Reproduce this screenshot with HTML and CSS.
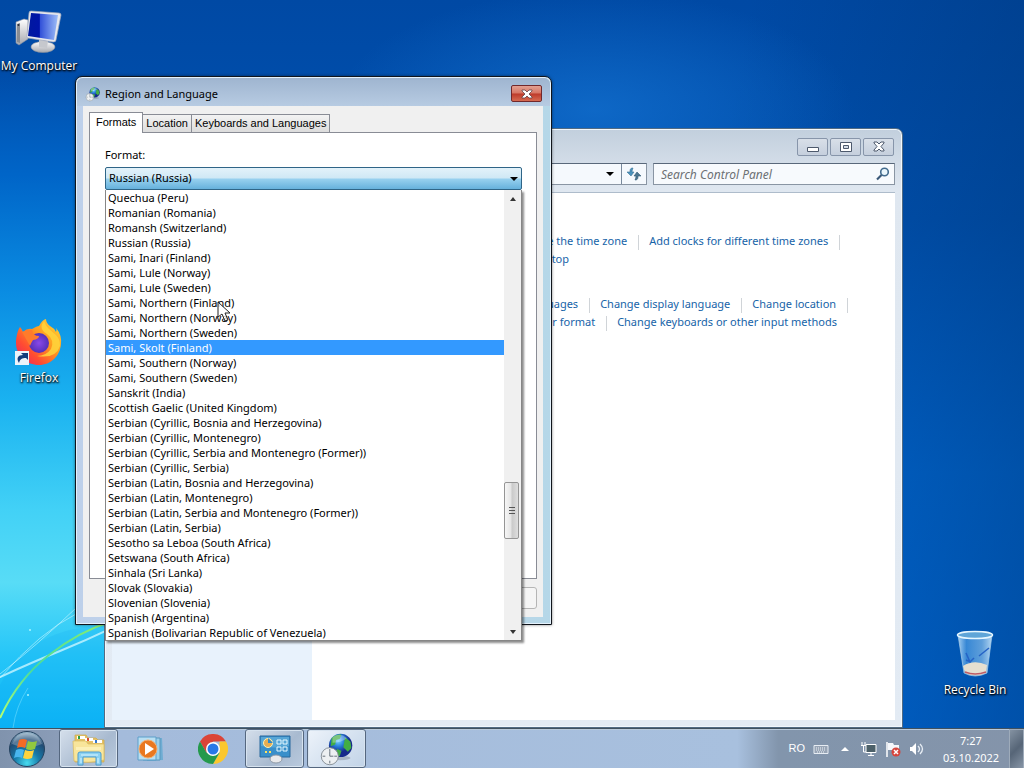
FILE: index.html
```
<!DOCTYPE html>
<html lang="en">
<head>
    <meta charset="UTF-8">
    <meta name="viewport" content="width=device-width, initial-scale=1.0">
    <title>Region and Language</title>
    <link rel="stylesheet" href="styles.css">
</head>
<body>
    <main class="desktop">
        <svg class="streaks" viewBox="0 0 110 200" aria-hidden="true">
            <defs>
                <linearGradient id="green" x1="0" y1="1" x2="1" y2="0">
                    <stop offset="0" stop-color="#b8ff70"/><stop offset=".4" stop-color="#49dc9a"/><stop offset="1" stop-color="#8df06c"/>
                </linearGradient>
            </defs>
            <path d="M0 157Q30 98 110 97V200H0Z" fill="#0098f0" opacity=".12"/>
            <path d="M0 149Q35 133 60 123T110 101" fill="none" stroke="#c9f5ff" stroke-width="2" opacity=".8"/>
            <path d="M0 146Q35 119 76 80M0 150Q40 104 76 86" fill="none" stroke="#c8f7ff" opacity=".6"/>
            <path d="M0 190Q18 151 49 127T110 94" fill="none" stroke="url(#green)" stroke-width="2"/>
            <path d="M13 200Q16 178 28 160" fill="none" stroke="#7fe3ff" opacity=".5"/>
            <circle cx="28" cy="167" r="1" fill="#a8f6ff"/><circle cx="30" cy="102" r="1" fill="#a8f6ff"/>
        </svg>

        <a class="shortcut computer" href="#">
            <svg width="48" height="44" viewBox="0 0 48 44">
                <defs>
                    <linearGradient id="screen"><stop offset="0" stop-color="#0018a0"/><stop offset=".38" stop-color="#0014a8"/><stop offset=".4" stop-color="#3150d8"/><stop offset="1" stop-color="#9dbdf8"/></linearGradient>
                    <linearGradient id="metal" x2="0" y2="1"><stop offset="0" stop-color="#fff"/><stop offset="1" stop-color="#a6a8ae"/></linearGradient>
                </defs>
                <path d="M1 12 9 9l4 1v19L4 35l-3-2z" fill="url(#metal)" stroke="#8c93a5" stroke-width=".6"/>
                <path d="M2 14l3-1v20l-3-1z" fill="#8a8d92"/><circle cx="3.500" cy="15" r="1" fill="#252b38"/>
                <ellipse cx="28" cy="37" rx="12" ry="5.500" fill="url(#metal)" stroke="#888e9c" stroke-width=".6"/>
                <path d="M24 29l9 2-1 7-8-1z" fill="#c6c8cd"/>
                <path d="M14 3q0-2 2-2l28 2q2 0 2 2l-5 25q0 2-3 2l-25-4q-2 0-1-3z" fill="#e6e8ed" stroke="#9da6bb" stroke-width=".7"/>
                <path d="M16 3l27 2-4 25-26-4z" fill="url(#screen)"/>
            </svg>
            <span>My Computer</span>
        </a>
        <a class="shortcut firefox" href="#">
            <svg width="48" height="48" viewBox="0 0 48 48">
                <defs>
                    <linearGradient id="fox" x1="1" y1="0" x2="0" y2="1"><stop offset="0" stop-color="#ffe03a"/><stop offset=".4" stop-color="#ff9a20"/><stop offset=".7" stop-color="#ff4b32"/><stop offset="1" stop-color="#e51b70"/></linearGradient>
                    <radialGradient id="purple"><stop offset="0" stop-color="#8a48e8"/><stop offset="1" stop-color="#5430b8"/></radialGradient>
                </defs>
                <path d="M5 9q2 2 3 5 4-4 9-3 5-3 7-3Q27 2 31 1q0 4 4 7 4 2 6 6 1-2 0-4 6 7 5 16C45 38 36 47 24 47S1 38 1 25C1 18 3 12 5 9z" fill="url(#fox)"/>
                <circle cx="24" cy="25" r="10" fill="url(#purple)"/>
                <path d="M29 3q-6 8 3 13 8 6 4 15-5 7-14 7 19 3 23-10C46 15 33 15 29 3z" fill="#ffd53c" opacity=".85"/>
                <path d="M7 14q6-3 10-2 1 6 7 6 0 3-6 4-2 3-3 6-4-7-8-14z" fill="#ff7b2b"/>
                <path d="M0 33h14v14H0z" fill="#edf3fa"/>
                <path d="M4 45c-3-5-1-8 4-8l-2-2h7v7l-2-2c-4 0-6 1-7 5z" fill="#143c7c"/>
            </svg>
            <span>Firefox</span>
        </a>
        <a class="shortcut recycle" href="#">
            <svg width="40" height="48" viewBox="0 0 40 48">
                <defs><linearGradient id="glass"><stop offset="0" stop-color="#d0edff" stop-opacity=".8"/><stop offset=".25" stop-color="#4e9de4" stop-opacity=".7"/><stop offset=".7" stop-color="#91c6f1" stop-opacity=".65"/><stop offset="1" stop-color="#d5eefe" stop-opacity=".85"/></linearGradient></defs>
                <path d="M3 5h34l-5 38q-12 6-23 0z" fill="url(#glass)" stroke="#a9cde8" stroke-width=".7"/>
                <path d="M8 36q11-7 24-1l-1 8q-11 5-21 0z" fill="#e6dfd0"/>
                <path d="M10 42q10 4 21 0" fill="none" stroke="#bd5b66" stroke-width="1.500"/>
                <path d="M11 23l4 9 4-4M16 32l-5-2M24 26l10-8" fill="none" stroke="#2663c6" stroke-width="1.500"/>
                <ellipse cx="20" cy="5" rx="17.500" ry="3.500" fill="#5fa5d8" stroke="#e6f6ff" stroke-width="1.500"/>
            </svg>
            <span>Recycle Bin</span>
        </a>

        <section class="window explorer" aria-label="Control Panel">
            <header class="explorer-title">
                <button class="caption-button" aria-label="Minimize"><svg width="12" height="12" viewBox="0 0 12 12"><path d="M.5 6.500h11v4H.5z" fill="#fff" stroke="#4d596c"/></svg></button>
                <button class="caption-button" aria-label="Maximize"><svg width="12" height="12" viewBox="0 0 12 12"><path d="M.5 1.500h11v9H.5z" fill="#fff" stroke="#4d596c"/><path d="M3.500 4.500h5v3h-5z" fill="#d3dbe6" stroke="#4d596c"/></svg></button>
                <button class="caption-button" aria-label="Close"><svg width="12" height="12" viewBox="0 0 12 12"><path d="M1 1h3l2 2 2-2h3v1L8 5.500 11 9v1H8L6 8l-2 2H1V9l3-3.500L1 2z" fill="#fff" stroke="#4d596c"/></svg></button>
            </header>
            <div class="navigation">
                <div class="address">
                    <button class="address-drop" aria-label="Previous locations"><svg width="8" height="4" viewBox="0 0 8 4"><path d="M0 0h8L4 4z"/></svg></button>
                    <button class="refresh" aria-label="Refresh"><svg width="14" height="14" viewBox="0 0 14 14"><path d="M6 1C3 1 3 3 3 5H0l4 4 3-4H5q0-2 1-4z" fill="#4b93bd" stroke="#3a7397" stroke-width=".6"/><path d="M8 13c3 0 3-2 3-4h3l-4-4-3 4h2q0 2-1 4z" fill="#4b7690" stroke="#335c75" stroke-width=".6"/></svg></button>
                </div>
                <label class="search">
                    <input type="text" placeholder="Search Control Panel" aria-label="Search Control Panel">
                    <svg width="14" height="14" viewBox="0 0 14 14"><circle cx="8.500" cy="5" r="3.800" fill="#e9f6fc" stroke="#426b8d" stroke-width="1.600"/><path d="M5.500 8 1 12.500" stroke="#3a5878" stroke-width="2.200"/></svg>
                </label>
            </div>
            <div class="explorer-body">
                <aside class="sidebar"></aside>
                <div class="tasks">
                    <ul class="task-group">
                        <li><a href="#">Set the time and date</a><a href="#">Change the time zone</a><a href="#">Add clocks for different time zones</a></li>
                        <li><a href="#">Add the Clock gadget to the desktop</a></li>
                    </ul>
                    <ul class="task-group">
                        <li><a href="#">Install and uninstall display languages</a><a href="#">Change display language</a><a href="#">Change location</a></li>
                        <li><a href="#">Change the date, time, or number format</a><a href="#">Change keyboards or other input methods</a></li>
                    </ul>
                </div>
            </div>
        </section>

        <section class="window dialog" role="dialog" aria-labelledby="dialog-title">
            <header class="dialog-title">
                <svg width="16" height="16" viewBox="0 0 40 40"><use href="#region-icon"/></svg>
                <h1 id="dialog-title">Region and Language</h1>
                <button class="close-button" aria-label="Close"><svg width="12" height="10" viewBox="0 0 12 10"><path d="M1 1h3l2 2 2-2h3v1L8 5l3 3v1H8L6 7 4 9H1V8l3-3-3-3z" fill="#fff" stroke="#614247" stroke-width=".8"/></svg></button>
            </header>
            <div class="dialog-body">
                <div class="tabs" role="tablist">
                    <button class="tab active" role="tab" aria-selected="true">Formats</button>
                    <button class="tab" role="tab">Location</button>
                    <button class="tab" role="tab">Keyboards and Languages</button>
                </div>
                <div class="panel" role="tabpanel">
                    <label for="format">Format:</label>
                    <div class="combo">
                        <select id="format">
                            <option>Russian (Russia)</option>
                        </select>
                        <svg class="combo-arrow" width="8" height="4" viewBox="0 0 8 4"><path d="M0 0h8L4 4z"/></svg>
                        <div class="menu">
                            <ul class="options" role="listbox" aria-label="Format">
                                <li role="option">Quechua (Peru)</li>
                                <li role="option">Romanian (Romania)</li>
                                <li role="option">Romansh (Switzerland)</li>
                                <li role="option">Russian (Russia)</li>
                                <li role="option">Sami, Inari (Finland)</li>
                                <li role="option">Sami, Lule (Norway)</li>
                                <li role="option">Sami, Lule (Sweden)</li>
                                <li role="option">Sami, Northern (Finland)</li>
                                <li role="option">Sami, Northern (Norway)</li>
                                <li role="option">Sami, Northern (Sweden)</li>
                                <li role="option" class="selected" aria-selected="true">Sami, Skolt (Finland)</li>
                                <li role="option">Sami, Southern (Norway)</li>
                                <li role="option">Sami, Southern (Sweden)</li>
                                <li role="option">Sanskrit (India)</li>
                                <li role="option">Scottish Gaelic (United Kingdom)</li>
                                <li role="option">Serbian (Cyrillic, Bosnia and Herzegovina)</li>
                                <li role="option">Serbian (Cyrillic, Montenegro)</li>
                                <li role="option">Serbian (Cyrillic, Serbia and Montenegro (Former))</li>
                                <li role="option">Serbian (Cyrillic, Serbia)</li>
                                <li role="option">Serbian (Latin, Bosnia and Herzegovina)</li>
                                <li role="option">Serbian (Latin, Montenegro)</li>
                                <li role="option">Serbian (Latin, Serbia and Montenegro (Former))</li>
                                <li role="option">Serbian (Latin, Serbia)</li>
                                <li role="option">Sesotho sa Leboa (South Africa)</li>
                                <li role="option">Setswana (South Africa)</li>
                                <li role="option">Sinhala (Sri Lanka)</li>
                                <li role="option">Slovak (Slovakia)</li>
                                <li role="option">Slovenian (Slovenia)</li>
                                <li role="option">Spanish (Argentina)</li>
                                <li role="option">Spanish (Bolivarian Republic of Venezuela)</li>
                            </ul>
                            <div class="scrollbar">
                                <button class="scroll-arrow" aria-label="Scroll up"><svg width="6" height="4" viewBox="0 0 6 4"><path d="M0 4h6L3 0z" fill="#333"/></svg></button>
                                <div class="track-before"></div>
                                <div class="thumb"><i></i><i></i><i></i></div>
                                <div class="track-after"></div>
                                <button class="scroll-arrow" aria-label="Scroll down"><svg width="6" height="4" viewBox="0 0 6 4"><path d="M0 0h6L3 4z" fill="#333"/></svg></button>
                            </div>
                        </div>
                    </div>
                </div>
                <footer class="dialog-buttons">
                    <button class="push-button" aria-label="Apply"></button>
                </footer>
            </div>
        </section>

        <svg class="cursor" width="14" height="21" viewBox="0 0 14 21" aria-hidden="true"><path d="M1 1v15l4-3 3 7 3-1-3-7h5z" fill="#fff" fill-opacity=".75" stroke="#222"/></svg>
    </main>

    <footer class="taskbar">
        <button class="start" aria-label="Start">
            <svg width="38" height="38" viewBox="0 0 38 38">
                <defs>
                    <radialGradient id="orb" cy=".9" r=".9"><stop offset="0" stop-color="#47dbef"/><stop offset=".4" stop-color="#167aa9"/><stop offset=".75" stop-color="#214b73"/><stop offset="1" stop-color="#a5c3d6"/></radialGradient>
                </defs>
                <circle cx="19" cy="19" r="17.500" fill="url(#orb)" stroke="#24425f"/>
                <path d="M4 14Q8 3 19 3t15 11q-15 7-30 0z" fill="#fff" opacity=".25"/>
                <path d="M11 10q4-2 8 0l-2 8q-4-2-8 0z" fill="#f36a25"/>
                <path d="M20 11q4 2 9 0l-2 8q-5 2-9 0z" fill="#91c83f"/>
                <path d="M8 20q4-2 8 0l-2 8q-4-2-8 0z" fill="#49b6ee"/>
                <path d="M17 20q5 2 9 0l-2 8q-5 2-9 0z" fill="#ffd33d"/>
            </svg>
        </button>
        <nav class="task-buttons" aria-label="Running programs">
            <button class="task-button open" aria-label="Windows Explorer">
                <svg width="36" height="34" viewBox="0 0 36 34">
                    <path d="M4 6V3h11l2 3h8l2 2h6v22H4z" fill="#e5c267" stroke="#cda949" stroke-width=".7"/>
                    <path d="M6 4h8v3H6zM14 6h8v3h-8zM22 8h9v3h-9z" fill="#fff"/><path d="M7 4h2v3H7z" fill="#2f9e44"/><path d="M16 6h2v3h-2z" fill="#dc4c30"/><path d="M24 8h2v3h-2z" fill="#3678ce"/>
                    <path d="M2 9h13l2 3h16v16q-16 4-30 1z" fill="#f8e59b" stroke="#d9b95d" stroke-width=".7"/>
                    <path d="M5 15h25v3H5z" fill="#fff7c9" opacity=".6"/>
                    <path d="M7 33V22q0-2 2-2h19q2 0 2 2v11h-5v-8H12v8z" fill="#8bd1f2" stroke="#4c9bcc"/>
                    <path d="M10 23h17M10 26v5M27 26v5" stroke="#d7f4ff"/>
                </svg>
            </button>
            <button class="task-button" aria-label="Windows Media Player">
                <svg width="30" height="28" viewBox="0 0 30 28">
                    <path d="M9 4l17-1 1 22-16 1z" fill="#6fadd3"/><path d="M7 3h17v22H7z" fill="#9dd0ea" stroke="#5a98bd"/>
                    <path d="M2 2h18v23H2z" fill="#b9dff2" stroke="#5d9fca"/>
                    <circle cx="12" cy="14" r="9" fill="#e97820" stroke="#f4af70"/><path d="M9 8l9 6-9 6z" fill="#fff"/>
                </svg>
            </button>
            <button class="task-button" aria-label="Google Chrome">
                <svg width="30" height="30" viewBox="0 0 30 30">
                    <path d="M2 7.500A15 15 0 0 1 28 7.500H15L8.500 19z" fill="#db4437"/>
                    <path d="M28 7.500A15 15 0 0 1 15 30l6.500-11.300L21.500 7.500z" fill="#fbc72e"/>
                    <path d="M2 7.500A15 15 0 0 0 15 30l6.500-11.300H8.500z" fill="#25994c"/>
                    <circle cx="15" cy="15" r="7" fill="#fff"/><circle cx="15" cy="15" r="5.500" fill="#2878e8"/>
                </svg>
            </button>
            <button class="task-button open" aria-label="Control Panel">
                <svg width="34" height="30" viewBox="0 0 34 30">
                    <path d="M2 2h30v21H2z" fill="#398fca" stroke="#28699d"/><path d="M3 3h28v9Q18 15 3 12z" fill="#6db6de" opacity=".6"/>
                    <circle cx="10" cy="9" r="4.500" fill="#e7ad52" stroke="#fff2b2"/><path d="M10 9V4l5 5z" fill="#2f88c7"/>
                    <path d="M19 6h4v4h-4zM25 6h4v4h-4zM19 13h4v4h-4zM25 13h4v4h-4z" fill="none" stroke="#e7f8ff"/>
                    <path d="M7 18h2M11 18h2" stroke="#ffe35e" stroke-width="2"/><ellipse cx="18" cy="25" rx="6" ry="4" fill="#e8e9eb" stroke="#8d98a5"/>
                </svg>
            </button>
            <button class="task-button open current" aria-label="Region and Language">
                <svg width="36" height="36" viewBox="0 0 40 40">
                    <defs><radialGradient id="globe" cx=".4" cy=".3"><stop offset="0" stop-color="#79d4ff"/><stop offset=".5" stop-color="#287dda"/><stop offset="1" stop-color="#152a8a"/></radialGradient></defs>
                    <g id="region-icon">
                        <ellipse cx="24" cy="30" rx="11" ry="2.500" fill="#8d9baa" opacity=".6"/>
                        <circle cx="24" cy="16" r="13" fill="url(#globe)"/>
                        <path d="M14 8q5-5 11-4l-2 5-4 1-1 5-5 2zM29 7l6 5 1 7-4 4-5-5zM20 20l5 2-2 6h-5z" fill="#42ad45"/>
                        <path d="M15 7q8-6 16 1-7 5-16 5z" fill="#fff" opacity=".3"/>
                        <circle cx="12" cy="28" r="9.500" fill="#edf0f2" stroke="#7f8890"/>
                        <path d="M12 20v3M12 33v3M4 28h3M17 28h3M12 23v5h4" stroke="#596570" fill="none"/>
                    </g>
                </svg>
            </button>
        </nav>
        <div class="tray">
            <span class="language">RO</span>
            <svg width="16" height="12" viewBox="0 0 16 12"><path d="M1 2.500h14v8H1z" fill="#97a4b5" stroke="#e6ecf3"/><path d="M3 5h10M3 7h10M4 9h8" stroke="#eef3f8" stroke-dasharray="1 1"/></svg>
            <svg width="16" height="16" viewBox="0 0 16 16"><path d="M4 10h8L8 6z" fill="#fff"/></svg>
            <svg width="16" height="16" viewBox="0 0 16 16"><path d="M5 3.500h10v8H5z" fill="#4c6069" stroke="#fff"/><path d="M10 12v2M7 14.500h6M1 1v4M4 1v4M0 4.500h5M2.500 5v6H5" fill="none" stroke="#fff"/></svg>
            <svg width="16" height="16" viewBox="0 0 16 16"><path d="M2 1v15" stroke="#fff" stroke-width="1.500"/><path d="M3 2h5l1 2h5v7H8l-1-2H3z" fill="#f5f7fb"/><circle cx="11" cy="11" r="4.500" fill="#d6453d"/><path d="M9 9l4 4M13 9l-4 4" stroke="#fff" stroke-width="1.500"/></svg>
            <svg width="16" height="16" viewBox="0 0 16 16"><path d="M1 6h2l4-4v12l-4-4H1z" fill="#fff"/><path d="M9 5q3 3 0 6M11 3q5 5 0 10" fill="none" stroke="#e7edf4" stroke-width="1.300"/></svg>
            <time class="clock" datetime="2022-10-03T07:27"><span>7:27</span><span>03.10.2022</span></time>
        </div>
        <button class="show-desktop" aria-label="Show desktop"></button>
    </footer>
</body>
</html>
```
FILE: styles.css
```
* {
    box-sizing: border-box;
}
body {
    margin: 0;
    height: 100vh;
    display: flex;
    flex-direction: column;
    overflow: hidden;
    font-family: "Noto Sans", "Open Sans", sans-serif;
    font-size: 11px;
    line-height: 15px;
    color: #000;
}
button, input, select {
    font: inherit;
    color: inherit;
    margin: 0;
    padding: 0;
}
ul {
    list-style: none;
    margin: 0;
    padding: 0;
}
a {
    text-decoration: none;
}
svg {
    display: block;
    flex: none;
}

/* desktop */
.desktop {
    flex: 1;
    position: relative;
    background:
        linear-gradient(rgba(0, 90, 195, 0) 10%, #0065c8 24%, #0a8ce2 40%, #1ab2f0 55%, #42d1f6 70%, #58dcf6 80%, #26c6f8 90%, #0cb6f6) left / 50% 100% no-repeat,
        radial-gradient(ellipse 260px 120px at 58% 110px, rgba(20, 115, 210, 0.7), rgba(20, 115, 210, 0)),
        linear-gradient(100deg, rgba(0, 50, 110, 0) 65%, rgba(0, 50, 110, 0.5) 100%),
        linear-gradient(#0049a4, #0052b2 30%, #006ad8 65%, #0070e6);
}
.streaks {
    position: absolute;
    left: 0;
    bottom: 0;
    width: 110px;
    height: 200px;
}
.shortcut {
    position: absolute;
    width: 78px;
    display: flex;
    flex-direction: column;
    align-items: center;
    gap: 4px;
    color: #fff;
    font-family: "Open Sans", "Noto Sans", sans-serif;
    font-size: 12px;
    text-align: center;
    white-space: nowrap;
    text-shadow: 0 1px 2px #000, 1px 1px 2px #000;
}
.computer {
    left: 0;
    top: 10px;
}
.firefox {
    left: 0;
    top: 318px;
}
.recycle {
    right: 10px;
    top: 630px;
}

/* windows */
.window {
    position: absolute;
    display: flex;
    flex-direction: column;
    border: 1px solid #1b2633;
    border-radius: 7px 7px 0 0;
}
.explorer {
    left: 104px;
    right: 121px;
    top: 128px;
    bottom: 0;
    padding: 0 7px 7px;
    border-color: #526b83;
    background: linear-gradient(#c2cfdd, #dfe7f0 60px, #e3ebf4);
    box-shadow: inset 0 0 0 1px #f1f7fc;
}
.explorer-title {
    display: flex;
    justify-content: flex-end;
    gap: 2px;
    padding: 9px 1px 7px 0;
}
.caption-button {
    width: 31px;
    height: 18px;
    display: grid;
    place-items: center;
    border: 1px solid #8795aa;
    border-radius: 2px;
    background: linear-gradient(#d8dfe8, #c5cfdd);
}
.navigation {
    display: flex;
    gap: 6px;
    height: 29px;
}
.address {
    flex: 1;
    display: flex;
    justify-content: flex-end;
    height: 22px;
    border: 1px solid #8995a3;
    border-top-color: #59687a;
    background: #f5f9fd;
}
.address-drop {
    width: 22px;
    border: 0;
    background: none;
    display: grid;
    place-items: center;
}
.refresh {
    width: 25px;
    border: 0;
    border-left: 1px solid #78899c;
    background: none;
    display: grid;
    place-items: center;
}
.search {
    width: 242px;
    height: 22px;
    display: flex;
    align-items: center;
    padding: 0 4px 0 7px;
    border: 1px solid #8995a3;
    border-top-color: #59687a;
    background: #f7fafd;
}
.search input {
    flex: 1;
    min-width: 0;
    border: 0;
    outline: 0;
    background: none;
    font-size: 12px;
}
.search input::placeholder {
    color: #6c7074;
    font-style: italic;
    opacity: 1;
}
.explorer-body {
    flex: 1;
    display: flex;
    border-top: 1px solid #aebccb;
    background: #fff;
}
.sidebar {
    flex: none;
    width: 200px;
    background: #e8f2fc;
}
.tasks {
    flex: 1;
    padding: 39px 0 0 69px;
}
.task-group {
    margin-bottom: 27px;
}
.task-group li {
    display: flex;
    line-height: 18px;
    white-space: nowrap;
}
.task-group a {
    color: #1663a8;
}
.task-group a:not(:last-child)::after,
.task-group li:first-child a::after {
    content: "";
    display: inline-block;
    height: 15px;
    margin: 0 10px 0 11px;
    border-left: 1px solid #d0d4d8;
    vertical-align: middle;
}

/* region dialog */
.dialog {
    left: 75px;
    top: 76px;
    bottom: 103px;
    width: 477px;
    padding: 0 8px 7px 7px;
    border-color: #10151c;
    background: linear-gradient(90deg, #bdd0ea 0, #c9d8eb 50%, #b5d7e8 100%);
    box-shadow: inset 0 0 0 1px #e5f2fc, 0 0 3px rgba(0, 0, 0, 0.5);
}
.dialog-title {
    height: 28px;
    margin: 1px -7px 0 -6px;
    padding: 3px 8px 0;
    display: flex;
    align-items: center;
    gap: 4px;
    border-radius: 6px 6px 0 0;
    background: linear-gradient(#9fb5d0, #b7cbe2);
}
.dialog-title h1 {
    flex: 1;
    margin: 0;
    font-size: 11px;
    font-weight: normal;
}
.close-button {
    width: 31px;
    height: 17px;
    display: grid;
    place-items: center;
    border: 1px solid #71282b;
    border-radius: 2px;
    background: linear-gradient(#e2a092 0, #d77563 48%, #bd3a2a 52%, #d66a51);
}
.dialog-body {
    flex: 1;
    display: flex;
    flex-direction: column;
    padding: 6px 6px 8px;
    background: #f0f0f0;
}
.tabs {
    display: flex;
    align-items: flex-end;
    height: 20px;
    font-family: "Liberation Sans", Arial, sans-serif;
}
.tab {
    height: 18px;
    padding: 0 3px;
    border: 1px solid #898c95;
    border-bottom: 0;
    background: linear-gradient(#f3f3f3, #dcdcdc);
}
.tab + .tab {
    border-left-width: 0;
}
.tab.active {
    height: 21px;
    padding: 0 6px 1px;
    margin-bottom: -1px;
    background: #fff;
    z-index: 1;
}
.panel {
    flex: 1;
    padding: 14px 14px 0 15px;
    border: 1px solid #898c95;
    background: #fff;
}
.panel label {
    display: block;
}
.combo {
    position: relative;
    margin-top: 5px;
}
.combo select {
    display: block;
    width: 100%;
    height: 23px;
    padding: 0 20px 2px 3px;
    border: 1px solid #2f6587;
    border-radius: 2px;
    outline: 0;
    appearance: none;
    background: linear-gradient(#e3f2fa 0, #cfe8f5 48%, #98d1ef 52%, #66b1dc);
}
.combo-arrow {
    position: absolute;
    right: 4px;
    top: 10px;
    pointer-events: none;
}
.menu {
    position: absolute;
    left: 0;
    right: 0;
    top: 100%;
    z-index: 2;
    display: flex;
    border: 1px solid #868686;
    border-top: 0;
    background: #fff;
    box-shadow: 2px 2px 2px rgba(0, 0, 0, 0.45);
}
.options {
    flex: 1;
}
.options li {
    padding-left: 2px;
    white-space: nowrap;
}
.options .selected {
    background: #3399ff;
    color: #fff;
}
.scrollbar {
    width: 17px;
    display: flex;
    flex-direction: column;
    background: #f0f0f0;
}
.scroll-arrow {
    height: 17px;
    border: 0;
    background: none;
    display: grid;
    place-items: center;
}
.track-before {
    flex: 275;
}
.track-after {
    flex: 84;
}
.thumb {
    height: 57px;
    margin-right: 2px;
    display: flex;
    flex-direction: column;
    align-items: center;
    justify-content: center;
    gap: 2px;
    border: 1px solid #959595;
    border-radius: 2px;
    background: linear-gradient(90deg, #f6f6f6, #e4e4e4 48%, #c9c9c9 52%, #dedede);
}
.thumb i {
    width: 6px;
    height: 1px;
    background: #555;
}
.dialog-buttons {
    display: flex;
    justify-content: flex-end;
    padding-top: 8px;
}
.push-button {
    width: 75px;
    height: 22px;
    border: 1px solid #b5b5b5;
    border-radius: 3px;
    background: #f5f5f5;
}
.cursor {
    position: absolute;
    left: 217px;
    top: 301px;
    z-index: 3;
    pointer-events: none;
}

/* taskbar */
.taskbar {
    height: 40px;
    display: flex;
    border-top: 1px solid #40515f;
    background: linear-gradient(90deg, #8093ad 0, #8b9db8 60px, #a4bbdb 120px, #a8c0de 72%, #8295ac 76%, #8494aa 100%);
    box-shadow: inset 0 1px 0 #b9cadc;
}
.start {
    width: 59px;
    padding-right: 5px;
    border: 0;
    background: none;
    display: grid;
    place-items: center;
}
.task-buttons {
    flex: 1;
    display: flex;
    gap: 3px;
}
.task-button {
    width: 59px;
    display: grid;
    place-items: center;
    border: 0;
    border-radius: 3px;
    background: none;
}
.task-button.open {
    border: 1px solid #55677f;
    background: linear-gradient(135deg, #d5dfeb, #a8bad0 60%, #b9cade);
    box-shadow: inset 0 0 0 1px #d7e3ef;
}
.task-button.current {
    background: linear-gradient(135deg, #edf3fa, #c1d3e7);
}
.tray {
    display: flex;
    align-items: center;
    gap: 8px;
    color: #fff;
}
.language {
    font-family: "Liberation Sans", Arial, sans-serif;
}
.clock {
    width: 76px;
    display: flex;
    flex-direction: column;
    gap: 2px;
    text-align: center;
}
.show-desktop {
    width: 15px;
    border: 1px solid #9eabba;
    border-bottom: 0;
    background: linear-gradient(135deg, #8492a2, #566577 50%, #8795a6);
}
```
